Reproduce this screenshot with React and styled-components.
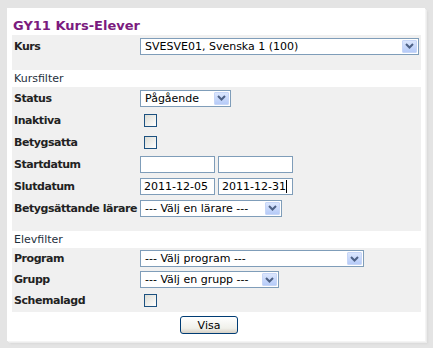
import React from "react";
import styled, { createGlobalStyle } from "styled-components";

const GlobalStyle = createGlobalStyle`
  body {
    margin: 0;
    background: #e4e4e4;
    font-family: "DejaVu Sans", Verdana, sans-serif;
    font-size: 11px;
    color: #000;
  }
`;

const Arrow = () => (
  <ArrowBox>
    <svg width="9" height="6" viewBox="0 0 9 6">
      <path d="M1 1 L4.5 4.5 L8 1" fill="none" stroke="#4d6185" strokeWidth="2" />
    </svg>
  </ArrowBox>
);

const Select = ({ width, children }) => (
  <SelectBox $width={width}>
    <SelectText>{children}</SelectText>
    <Arrow />
  </SelectBox>
);

export default function App() {
  return (
    <>
      <GlobalStyle />
      <Page>
        <Panel>
          <Title>GY11 Kurs-Elever</Title>

          <Section $bottom={13}>
            <Row>
              <Label>Kurs</Label>
              <Select width={279}>SVESVE01, Svenska 1 (100)</Select>
            </Row>
          </Section>

          <Heading>Kursfilter</Heading>
          <Section $bottom={12}>
            <Row>
              <Label>Status</Label>
              <Select width={91}>Pågående</Select>
            </Row>
            <Row>
              <Label>Inaktiva</Label>
              <Checkbox />
            </Row>
            <Row>
              <Label>Betygsatta</Label>
              <Checkbox />
            </Row>
            <Row>
              <Label>Startdatum</Label>
              <Dates>
                <TextInput />
                <TextInput />
              </Dates>
            </Row>
            <Row>
              <Label>Slutdatum</Label>
              <Dates>
                <TextInput>2011-12-05</TextInput>
                <TextInput>
                  2011-12-31<Caret />
                </TextInput>
              </Dates>
            </Row>
            <Row>
              <Label>Betygsättande lärare</Label>
              <Select width={142}>--- Välj en lärare ---</Select>
            </Row>
          </Section>

          <Heading>Elevfilter</Heading>
          <Section $bottom={1}>
            <Row $h={21}>
              <Label>Program</Label>
              <Select width={224}>--- Välj program ---</Select>
            </Row>
            <Row $h={21}>
              <Label>Grupp</Label>
              <Select width={139}>--- Välj en grupp ---</Select>
            </Row>
            <Row $h={21}>
              <Label>Schemalagd</Label>
              <Checkbox />
            </Row>
          </Section>

          <Footer>
            <Button>Visa</Button>
          </Footer>
        </Panel>
      </Page>
    </>
  );
}

const Page = styled.div`
  padding: 8px 8px 7px 7px;
`;

const Panel = styled.div`
  background: #fff;
  width: 409px;
  padding: 0 4px 0 5px;
  box-shadow: 1px 1px 0 #f4f4f4, 2px 2px 0 #ececec, 3px 3px 2px #d8d8d8;
`;

const Title = styled.div`
  height: 27px;
  box-sizing: border-box;
  padding: 10px 0 0 1px;
  font-size: 13px;
  line-height: 15px;
  font-weight: bold;
  color: #7b1b7e;
`;

const Section = styled.div`
  background: #f0f0f0;
  padding-bottom: ${(p) => p.$bottom}px;
`;

const Heading = styled.div`
  height: 16px;
  line-height: 16px;
  padding: 0 2px;
  margin-top: 1px;
  background: #fff;
  color: #1e2f3c;
`;

const Row = styled.div`
  display: flex;
  align-items: center;
  height: ${(p) => p.$h || 22}px;
`;

const Label = styled.div`
  width: 128px;
  box-sizing: border-box;
  padding-left: 2px;
  flex: none;
  white-space: nowrap;
  overflow: hidden;
  font-weight: bold;
  color: #222;
  letter-spacing: -0.45px;
`;

const SelectBox = styled.div`
  width: ${(p) => p.$width}px;
  height: 17px;
  box-sizing: border-box;
  border: 1px solid #7f9db9;
  background: #fff;
  display: flex;
  align-items: center;
  padding: 0 1px 0 4px;
`;

const SelectText = styled.span`
  flex: 1;
  white-space: nowrap;
  overflow: hidden;
`;

const ArrowBox = styled.span`
  width: 15px;
  height: 13px;
  flex: none;
  display: flex;
  align-items: center;
  justify-content: center;
  background: linear-gradient(#dbe6fd, #b6cbf8);
  border: 1px solid #c7d6f7;
  box-sizing: border-box;
  border-radius: 1px;
`;

const Checkbox = styled.span`
  width: 13px;
  height: 13px;
  margin-left: 4px;
  box-sizing: border-box;
  border: 1px solid #1c5180;
  background: linear-gradient(135deg, #dcdcd5, #fff);
`;

const Dates = styled.div`
  display: flex;
  gap: 3px;
`;

const TextInput = styled.div`
  width: 75px;
  height: 17px;
  box-sizing: border-box;
  border: 1px solid #7f9db9;
  background: #fff;
  padding-left: 3px;
  line-height: 15px;
  display: flex;
  align-items: center;
`;

const Caret = styled.span`
  width: 1px;
  height: 13px;
  background: #000;
`;

const Footer = styled.div`
  display: flex;
  justify-content: center;
  padding: 4px 15px 7px 0;
`;

const Button = styled.button`
  width: 58px;
  height: 18px;
  padding: 0;
  font-family: "DejaVu Sans", Verdana, sans-serif;
  font-size: 11px;
  color: #000;
  border: 1px solid #003c74;
  border-radius: 3px;
  background: linear-gradient(#ffffff, #f0f0ea 70%, #d6d0c5);
`;
